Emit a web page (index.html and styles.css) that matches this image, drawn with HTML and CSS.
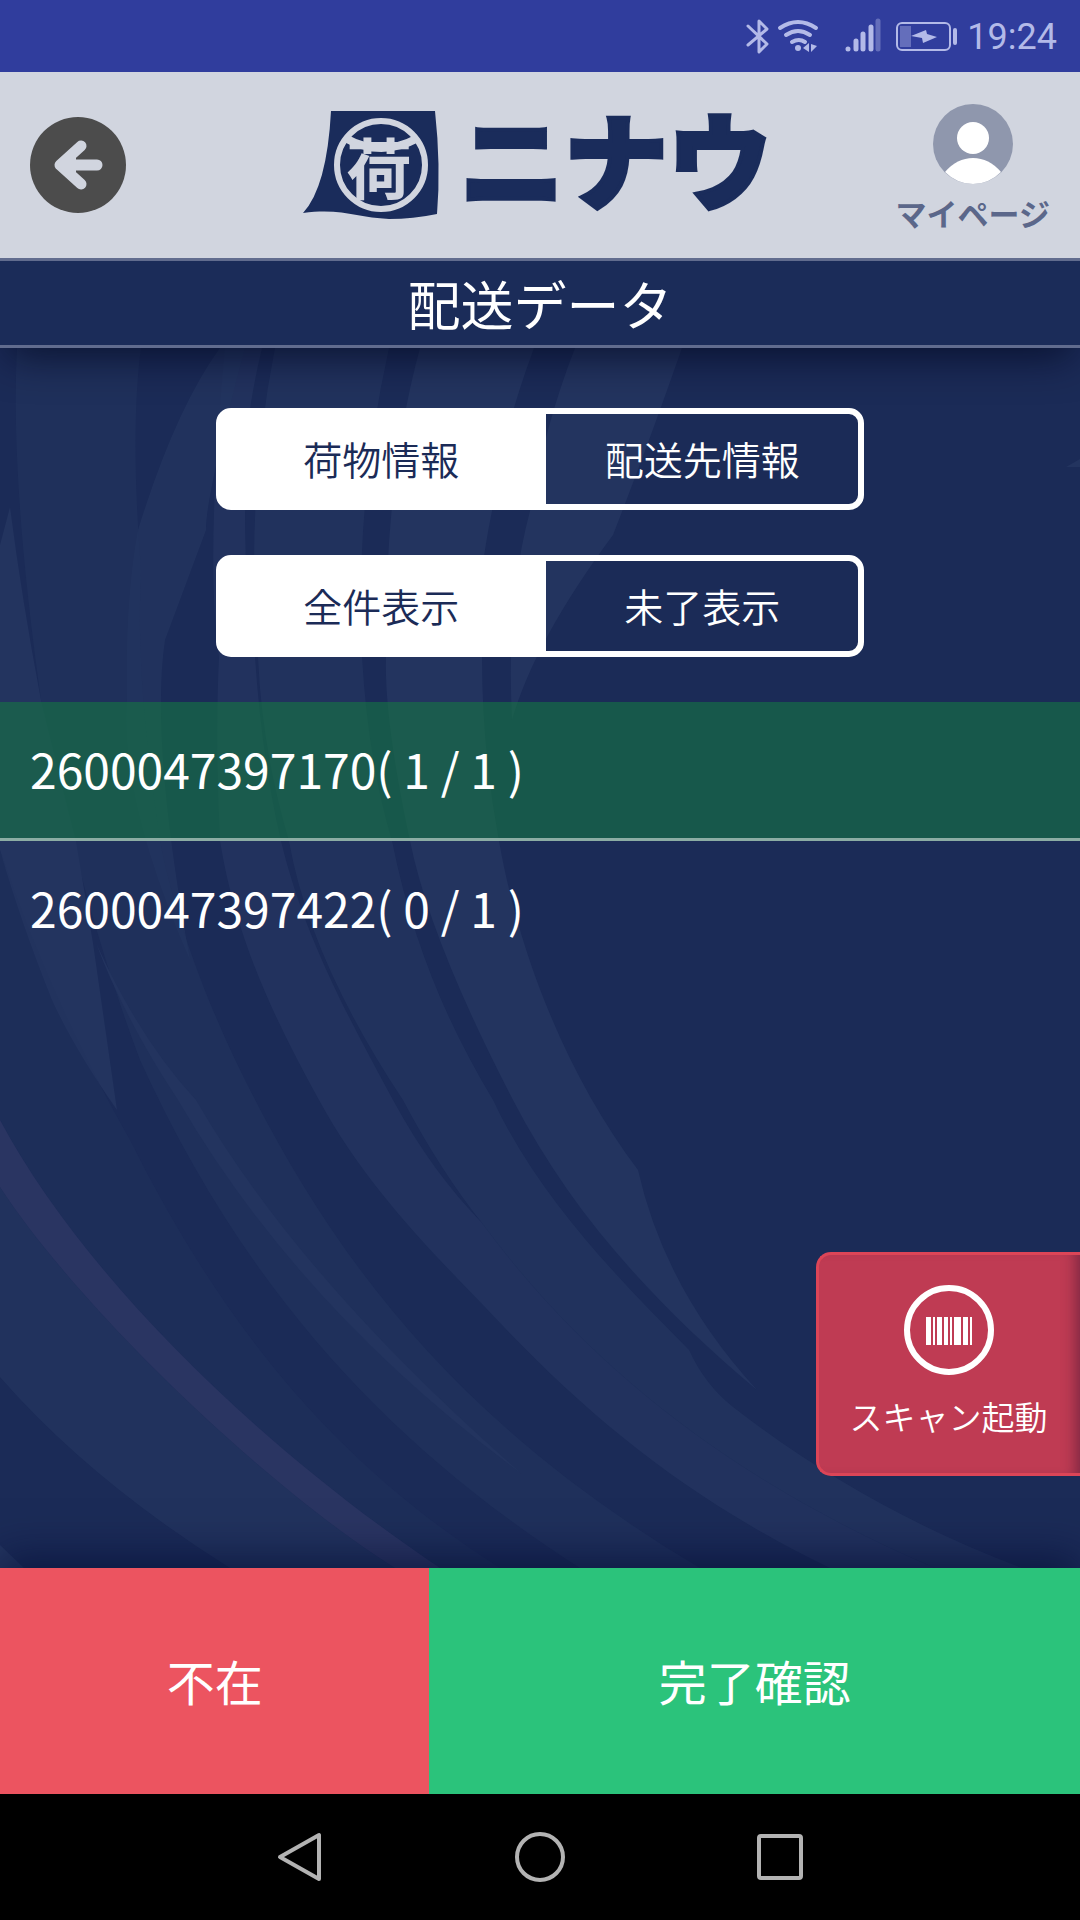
FILE: index.html
```html
<!DOCTYPE html>
<html lang="ja">
<head>
  <meta charset="UTF-8">
  <meta name="viewport" content="width=device-width, initial-scale=1.0">
  <title>配送データ</title>
  <link rel="stylesheet" href="styles.css">
</head>
<body>
  <div class="status-bar">
    <svg class="status-icons" width="224" height="72" viewBox="0 0 224 72">
      <path class="line" stroke-width="3" d="M5 26l19 18-8 8V21l8 8L5 45"/>
      <path class="line" stroke-width="4" d="M37 28q18-12 36 0M43 35q12-8 24 0M49 42q7-4 13 0"/>
      <circle cx="55" cy="48" r="3"/>
      <path d="M60 48l6-5v9zM74 46l-6-2v8z"/>
      <path class="line" stroke-width="5" d="M105 49v0M113 41v8M120 34v15M128 27v22"/>
      <path class="line faint" stroke-width="5" d="M135 21v28"/>
      <rect class="line" stroke-width="2" x="154" y="23" width="53" height="27" rx="5"/>
      <rect class="faint" x="157" y="26" width="11" height="21"/>
      <path d="M168 36l15-6 1 4 10 3-14 6-1-5z"/>
      <path class="line" stroke-width="4" d="M212 30v13"/>
    </svg>
    <span class="clock">19:24</span>
  </div>

  <header class="header">
    <button type="button" class="back" aria-label="戻る">
      <svg width="96" height="96" viewBox="0 0 96 96">
        <circle cx="48" cy="48" r="48" fill="#4c4c4c"/>
        <path d="M51 29L30 48l21 19M34 48h33" fill="none" stroke="#d1d5df" stroke-width="11" stroke-linecap="round" stroke-linejoin="round"/>
        <path d="M26 48l20-18v36z" fill="#d1d5df"/>
      </svg>
    </button>
    <svg class="logo" width="474" height="108" viewBox="0 0 474 108" role="img" aria-label="ニナウ">
      <path fill="#1a2c5b" d="M28 0H132Q138 55 134 103Q110 108 86 108C55 107 40 97 0 102Q24 76 28 0z"/>
      <circle class="logo-line" cx="78" cy="54" r="44" stroke-width="6"/>
      <path class="logo-line" d="M42 27Q78 47 115 27" stroke-width="8"/>
      <text class="logo-kanji" x="76" y="83" text-anchor="middle">荷</text>
      <text class="logo-name" x="157" y="91">ニナウ</text>
    </svg>
    <a href="#" class="mypage">
      <svg width="80" height="80" viewBox="0 0 80 80">
        <circle cx="40" cy="40" r="40" fill="#8f97ad"/>
        <circle cx="40" cy="34" r="16" fill="#fff"/>
        <path d="M12 68Q24 54 40 54T68 68Q56 80 40 80T12 68z" fill="#fff"/>
      </svg>
      <span>マイページ</span>
    </a>
  </header>

  <h1 class="page-title">配送データ</h1>

  <main class="content">
    <svg class="backdrop" viewBox="0 348 1080 1220" preserveAspectRatio="xMinYMin slice" aria-hidden="true">
      <g fill="#23345f">
        <path d="M575 348H682Q650 440 613 535Q535 640 512 720Q506 600 530 511Q545 425 575 348z"/>
        <path d="M420 348H534Q500 440 492 511Q472 610 482 657Q482 750 499 841C520 960 570 1080 638 1170Q665 1290 757 1390C650 1300 570 1210 513 1100Q430 940 410 841Q384 720 386 657Q384 480 420 348z"/>
        <path d="M275 348H389Q355 500 362 657Q368 760 392 841C412 940 445 1020 493 1100C540 1200 620 1280 689 1350Q705 1385 733 1407C820 1475 920 1530 1022 1568H935C740 1485 590 1370 482 1223Q440 1170 403 1100Q310 960 289 841Q262 750 258 657Q245 500 275 348z" opacity=".8"/>
        <path d="M225 348H262Q240 440 245 511Q245 600 255 657Q262 760 281 841C305 940 350 1020 393 1100C420 1150 450 1190 482 1223C590 1370 740 1485 935 1568H830C690 1500 590 1420 485 1307C430 1250 365 1185 319 1100C275 1020 236 940 220 841Q215 740 219 657Q205 560 225 348z" opacity=".85"/>
        <path d="M220 348H245Q205 500 206 530L165 640Q150 740 190 960Q120 800 127 700Q125 600 138 530Q175 410 220 348z" opacity=".8"/>
        <path d="M17 348H141Q130 430 141 570Q135 680 160 841C175 920 210 1010 245 1080C330 1250 450 1420 700 1568H580C380 1440 240 1280 140 1060Q80 900 41 700Q10 480 17 348z" opacity=".55"/>
        <path d="M0 545L10 507Q22 600 41 700Q58 770 76 841L93 943L117 1110Q75 1050 52 1000Q20 920 0 850z"/>
        <path d="M96 943Q140 1040 196 1100Q300 1280 522 1474Q300 1310 178 1100Q125 1020 96 943z"/>
        <path d="M0 850Q50 1000 130 1140C220 1320 330 1460 500 1568H440C250 1440 80 1270 0 1120z" opacity=".35"/>
        <path d="M0 1187C80 1310 270 1490 395 1568H230Q90 1480 0 1377z" opacity=".8"/>
        <path d="M0 1545L24 1568H0zM1066 467l14-8v8z"/>
      </g>
      <path fill="#2a3562" d="M0 1120C80 1270 250 1440 440 1568H395C270 1490 80 1310 0 1187z"/>
    </svg>

    <div class="segment">
      <button type="button" class="active">荷物情報</button>
      <button type="button">配送先情報</button>
    </div>
    <div class="segment">
      <button type="button" class="active">全件表示</button>
      <button type="button">未了表示</button>
    </div>

    <ul class="parcel-list">
      <li class="done">2600047397170( 1 / 1 )</li>
      <li>2600047397422( 0 / 1 )</li>
    </ul>

    <button type="button" class="scan">
      <svg width="90" height="90" viewBox="0 0 90 90">
        <circle cx="45" cy="45" r="42" fill="none" stroke="#fff" stroke-width="6"/>
        <path fill="#fff" d="M22 32h5v28h-5zM29 32h2v28h-2zM33 32h5v28h-5zM40 32h4v28h-4zM46 32h2v28h-2zM50 32h7v28h-7zM59 32h5v28h-5zM66 32h2v28h-2z"/>
      </svg>
      <span>スキャン起動</span>
    </button>
  </main>

  <footer class="actions">
    <button type="button" class="absent">不在</button>
    <button type="button" class="complete">完了確認</button>
  </footer>

  <nav class="nav-bar">
    <button type="button" aria-label="戻る">
      <svg width="50" height="50" viewBox="0 0 50 50"><path d="M44 3v44L5 25z"/></svg>
    </button>
    <button type="button" aria-label="ホーム">
      <svg width="50" height="50" viewBox="0 0 50 50"><circle cx="25" cy="25" r="23"/></svg>
    </button>
    <button type="button" aria-label="履歴">
      <svg width="50" height="50" viewBox="0 0 50 50"><rect x="4" y="4" width="42" height="42" rx="2"/></svg>
    </button>
  </nav>
</body>
</html>
```
FILE: styles.css
```css
* {
  box-sizing: border-box;
}
body {
  display: flex;
  flex-direction: column;
  min-height: 100vh;
  margin: 0;
  font-family: "Noto Sans CJK JP", sans-serif;
  background-color: #1b2b57;
  color: white;
}
button {
  padding: 0;
  border: none;
  background: none;
  color: inherit;
  font-family: inherit;
  cursor: pointer;
}
svg {
  display: block;
}

/* status bar */
.status-bar {
  display: flex;
  align-items: center;
  justify-content: flex-end;
  height: 72px;
  padding-right: 23px;
  background-color: #303d9d;
  color: #b3bae8;
}
.status-icons {
  fill: #b3bae8;
}
.status-icons .line {
  fill: none;
  stroke: #b3bae8;
  stroke-linecap: round;
  stroke-linejoin: round;
}
.status-icons .faint {
  opacity: 0.4;
}
.clock {
  padding-top: 2px;
  font-family: Roboto, sans-serif;
  font-size: 36px;
}

/* header */
.header {
  position: relative;
  z-index: 2;
  display: grid;
  grid-template-columns: 1fr auto 1fr;
  align-items: center;
  height: 186px;
  padding: 0 30px;
  background-color: #d1d5df;
}
.back {
  justify-self: start;
}
.logo {
  overflow: visible;
}
.logo-line {
  fill: none;
  stroke: #d1d5df;
}
.logo-kanji {
  fill: #d1d5df;
  font-size: 66px;
  font-weight: 700;
}
.logo-name {
  fill: #1a2c5b;
  stroke: #1a2c5b;
  stroke-width: 4px;
  font-size: 104px;
  font-weight: 900;
}
.mypage {
  display: flex;
  flex-direction: column;
  align-items: center;
  gap: 15px;
  justify-self: end;
  color: #5b678a;
  font-size: 31px;
  font-weight: 700;
  line-height: 28px;
  text-decoration: none;
}
.page-title {
  position: relative;
  z-index: 1;
  margin: 0;
  border-top: 3px solid #616c8e;
  border-bottom: 3px solid #616c8e;
  background-color: #1b2c59;
  box-shadow: 0 16px 40px -8px rgba(0, 5, 30, 0.7);
  font-size: 53px;
  font-weight: 400;
  line-height: 84px;
  text-align: center;
}

/* content */
.content {
  position: relative;
  flex: 1;
  padding-top: 60px;
}
.backdrop {
  position: absolute;
  top: 0;
  left: 0;
  width: 100%;
  height: 100%;
}
.segment {
  position: relative;
  display: flex;
  width: 60%;
  height: 102px;
  margin: 0 auto 45px;
  border: 6px solid white;
  border-radius: 15px;
}
.segment button {
  flex: 1;
  padding-bottom: 3px;
  font-size: 39px;
  font-weight: 350;
}
.segment .active {
  flex: 0 0 51%;
  padding-right: 6px;
  background-color: white;
  color: #1b2b57;
}
.parcel-list {
  position: relative;
  margin: 0;
  padding: 0;
  list-style: none;
  font-size: 48px;
}
.parcel-list li {
  padding: 0 30px 3px;
  line-height: 133px;
}
.parcel-list .done {
  border-bottom: 3px solid #8cada4;
  background-color: rgba(21, 118, 67, 0.6);
}
.scan {
  position: absolute;
  right: 0;
  bottom: 92px;
  display: flex;
  flex-direction: column;
  align-items: center;
  gap: 17px;
  width: 264px;
  height: 224px;
  padding: 30px 2px 0 0;
  border: 3px solid #dc4557;
  border-right: none;
  border-radius: 15px 0 0 15px;
  background-color: #bf3b53;
  box-shadow: inset -14px 0 14px -10px rgba(60, 20, 50, 0.5);
  font-size: 33px;
  font-weight: 350;
  line-height: 48px;
}

/* bottom actions */
.actions {
  position: relative;
  display: flex;
  height: 226px;
  box-shadow: 0 -10px 40px rgba(0, 10, 50, 0.6);
}
.actions button {
  padding-bottom: 3px;
  font-size: 48px;
}
.absent {
  flex: 33;
  background-color: #ec5460;
}
.complete {
  flex: 50;
  background-color: #2bc37b;
}
.nav-bar {
  position: relative;
  display: flex;
  align-items: center;
  justify-content: center;
  gap: 190px;
  height: 126px;
  background-color: black;
}
.nav-bar svg {
  fill: none;
  stroke: #b3b3b3;
  stroke-width: 4px;
  stroke-linejoin: round;
}
```
